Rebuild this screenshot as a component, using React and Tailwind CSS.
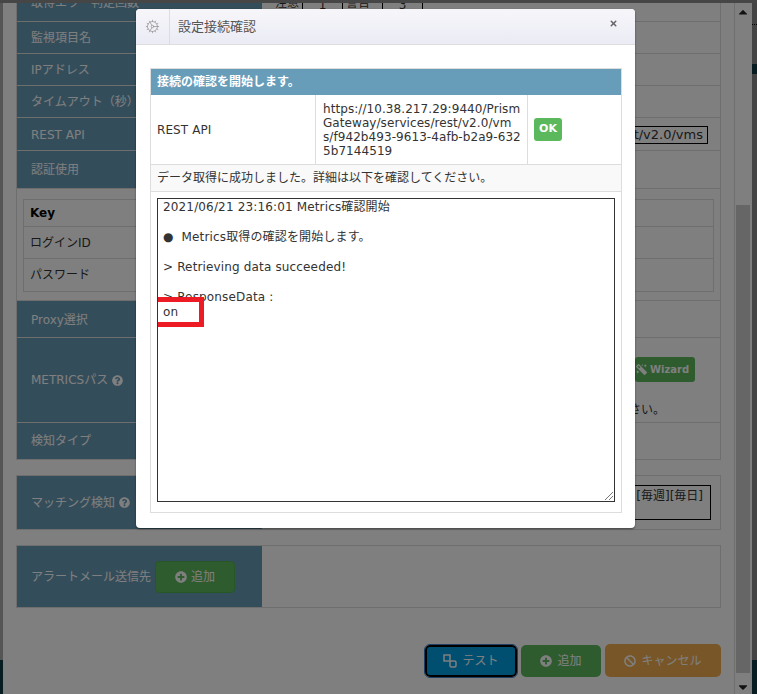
import { Cog, X } from "lucide-react";
import {
  FaBan,
  FaMagic,
  FaPlusCircle,
  FaQuestionCircle,
  FaCaretUp,
  FaCaretDown,
} from "react-icons/fa";

const font = { fontFamily: '"DejaVu Sans", "Noto Sans CJK JP", sans-serif' };

const logLines = [
  "2021/06/21 23:16:01 Metrics確認開始",
  "",
  "●  Metrics取得の確認を開始します。",
  "",
  "> Retrieving data succeeded!",
  "",
  "> ResponseData :",
  "on",
];

function Label({ children, className = "" }) {
  return (
    <div className={`flex w-[245px] shrink-0 items-center gap-1 bg-[#689bb6] pl-[14px] text-white ${className}`}>
      {children}
    </div>
  );
}

function FormRow({ label, height, children }) {
  return (
    <div className={`flex border-b border-[#dddddd] ${height}`}>
      <Label>{label}</Label>
      <div className="flex-1">{children}</div>
    </div>
  );
}

function KeyRow({ children, height, bold }) {
  return (
    <div className={`flex items-center border-b border-[#dddddd] pl-[6px] last:border-b-0 ${height} ${bold ? "font-bold text-black" : ""}`}>
      {children}
    </div>
  );
}

function ActionButton({ icon, children, className }) {
  return (
    <button className={`flex items-center justify-center gap-[5px] rounded-[5px] text-white ${className}`}>
      {icon}
      {children}
    </button>
  );
}

function TestIcon() {
  return (
    <svg width="14" height="14" viewBox="0 0 14 14" fill="none" stroke="currentColor" strokeWidth="1.5">
      <rect x="1" y="1" width="6" height="6" />
      <rect x="7" y="7" width="6" height="6" rx="1.5" />
    </svg>
  );
}

function ConnectionDialog() {
  return (
    <div className="absolute top-[9px] left-[136px] flex h-[519px] w-[499px] flex-col rounded-[4px] bg-white shadow-[0_1px_2px_rgba(0,0,0,0.5)]">
      <div className="flex h-[36px] shrink-0 items-stretch rounded-t-[4px] border-b border-[#dddddd] bg-gradient-to-b from-[#f6f6fa] to-[#ebebf5]">
        <div className="flex w-[34px] items-center justify-center border-r border-[#dddddd] text-[#999999]">
          <Cog size={15} strokeWidth={1.25} />
        </div>
        <div className="flex flex-1 items-center pl-[8px] text-[13px] text-[#555555]">設定接続確認</div>
        <div className="flex w-[44px] items-start justify-center pt-[10px] text-[#666666]">
          <X size={9} strokeWidth={4} />
        </div>
      </div>

      <div className="mt-[23px] mr-[13px] ml-[14px] border border-[#dddddd] text-[#333333]">
        <div className="flex h-[26px] items-center bg-[#689dba] pl-[6px] font-bold text-white">
          接続の確認を開始します。
        </div>
        <div className="flex h-[70px] border-b border-[#dddddd]">
          <div className="flex w-[165px] items-center border-r border-[#dddddd] pl-[6px] tracking-[0.1px]">REST API</div>
          <div className="flex w-[212px] items-center border-r border-[#dddddd] pl-[7px] leading-[14px] tracking-[0.07px]">
            <div>
              https://10.38.217.29:9440/Prism
              <br />
              Gateway/services/rest/v2.0/vm
              <br />
              s/f942b493-9613-4afb-b2a9-632
              <br />
              5b7144519
            </div>
          </div>
          <div className="flex flex-1 items-center pl-[6px]">
            <span className="flex h-[23px] w-[28px] items-center justify-center rounded-[3px] bg-[#5cb85c] text-[11px] font-bold text-white">
              OK
            </span>
          </div>
        </div>
        <div className="flex h-[27px] items-center border-b border-[#dddddd] bg-[#f9f9f9] pl-[6px]">
          データ取得に成功しました。詳細は以下を確認してください。
        </div>
        <div className="px-[6px] pt-[6px] pb-[10px]">
          <div className="relative h-[304px] overflow-hidden border border-[#333333] pt-[1px] pl-[5px] leading-[15px] tracking-[0.15px] whitespace-pre">
            {logLines.map((line, i) => (
              <div key={i} className="h-[15px]">{line}</div>
            ))}
            <svg className="absolute right-0 bottom-0" width="10" height="10" viewBox="0 0 10 10">
              <path d="M1 9 9 1M5 9 9 5" stroke="#777777" strokeWidth="1" />
            </svg>
            {/* red marker round the result */}
            <div className="absolute top-[98px] left-[-6px] h-[30px] w-[52px] border-[5px] border-[#ed1c24]" />
          </div>
        </div>
      </div>
    </div>
  );
}

export default function App() {
  return (
    <div className="relative h-[694px] w-[757px] overflow-hidden bg-white text-[12px] text-[#333333]" style={font}>
      <div className="h-[3px] bg-[#8c8c8c]" />
      <div className="flex h-[691px]">
        <div className="flex w-[3px] flex-col bg-[#aaaaaa]">
          <div className="flex-1" />
          <div className="h-[34px] bg-[#0f3a45]" />
        </div>

        {/* form behind the dialog */}
        <div className="w-[732px] border-r border-[#dddddd] pr-[13px] pl-[13px]">
          <div className="border-x border-[#dddddd]">
            <div className="flex h-[19px] overflow-hidden border-b border-[#dddddd]">
              <Label className="items-end pb-[9px]">取得エラー判定回数</Label>
              <div className="flex flex-1 items-end pb-[9px] pl-[13px]">
                <span className="w-[27px]">注意</span>
                <span className="h-[24px] w-[41px] border border-black text-center leading-[32px]">1</span>
                <span className="w-[39px] pl-[3px]">警告</span>
                <span className="h-[24px] w-[41px] border border-black text-center leading-[32px]">3</span>
              </div>
            </div>
            <FormRow label="監視項目名" height="h-[32px]" />
            <FormRow label="IPアドレス" height="h-[32px]" />
            <FormRow label="タイムアウト（秒）" height="h-[32px]" />
            <FormRow label={<span className="pt-[1px]">REST API</span>} height="h-[33px]">
              <div className="flex h-full items-center justify-end pt-[1px] pr-[12px]">
                <div className="flex h-[18px] w-[436px] items-center justify-end border border-black pr-[4px] text-[13px] whitespace-nowrap">
                  rest/v2.0/vms
                </div>
              </div>
            </FormRow>
            <FormRow label="認証使用" height="h-[38px]" />
            <div className="h-[112px] border-b border-[#dddddd] px-[6px] pt-[10px]">
              <div className="border border-[#dddddd]">
                <KeyRow height="h-[27px]" bold>Key</KeyRow>
                <KeyRow height="h-[32px]">ログインID</KeyRow>
                <KeyRow height="h-[32px]">パスワード</KeyRow>
              </div>
            </div>
            <FormRow label={<span className="pt-[1px]">Proxy選択</span>} height="h-[37px]" />
            <div className="flex h-[85px] border-b border-[#dddddd]">
              <Label>
                METRICSパス
                <FaQuestionCircle size={11} />
              </Label>
              <div className="flex flex-1 flex-col items-end">
                <div className="mt-[19px] mr-[25px] flex h-[25px] w-[60px] items-center gap-[3px] rounded-[3px] bg-[#5cb85c] pl-[1px] text-[10px] font-bold text-white">
                  <FaMagic size={11} className="-scale-x-100" />
                  Wizard
                </div>
                <div className="mt-[19px] mr-[55px]">さい。</div>
              </div>
            </div>
            <FormRow label="検知タイプ" height="h-[37px]" />
          </div>

          <div className="mt-[15px] flex h-[55px] border border-[#dddddd]">
            <Label>
              マッチング検知
              <FaQuestionCircle size={11} />
              <span className="ml-[1px] h-[29px] w-[80px] rounded-[4px] bg-[#5cb85c]" />
            </Label>
            <div className="flex flex-1 items-center justify-end pr-[9px]">
              <div className="flex h-[35px] w-[120px] justify-end border border-black pt-[1px] pr-[7px]">
                [毎週][毎日]
              </div>
            </div>
          </div>

          <div className="mt-[15px] flex h-[63px] border border-[#dddddd]">
            <Label>
              アラートメール送信先
              <span className="flex h-[32px] w-[80px] items-center justify-center gap-[4px] rounded-[4px] border border-[#4cae4c] bg-[#5cb85c]">
                <FaPlusCircle size={12} />
                追加
              </span>
            </Label>
          </div>

          <div className="mt-[36px] flex items-end justify-end gap-[4px]">
            <ActionButton
              icon={<TestIcon />}
              className="h-[32px] w-[92px] border-2 border-black bg-[#029fe0] outline outline-1 outline-[#3d7dc4]"
            >
              テスト
            </ActionButton>
            <ActionButton icon={<FaPlusCircle size={12} />} className="h-[32px] w-[80px] bg-[#5cb85c]">
              追加
            </ActionButton>
            <ActionButton icon={<FaBan size={12} />} className="h-[33px] w-[116px] bg-[#f0ad4e]">
              キャンセル
            </ActionButton>
          </div>
        </div>

        {/* page scrollbar */}
        <div className="flex w-[17px] flex-col items-center bg-white pr-[2px] pl-[1px] text-[#222222]">
          <FaCaretUp size={14} className="mt-[2px]" />
          <div className="mt-[186px] h-[469px] w-full bg-[#cdcdcd]" />
          <FaCaretDown size={14} className="mt-[7px]" />
        </div>

        <div className="flex w-[5px] flex-col bg-[#888888]">
          <div className="h-[21px]" />
          <div className="h-[1px] border-t border-dotted border-black" />
          <div className="h-[39px]" />
          <div className="h-[10px] bg-[#0f3a45]" />
          <div className="flex-1" />
          <div className="h-[34px] bg-[#0f3a45]" />
        </div>
      </div>

      <div className="absolute inset-0 bg-black/50" />
      <ConnectionDialog />
    </div>
  );
}
